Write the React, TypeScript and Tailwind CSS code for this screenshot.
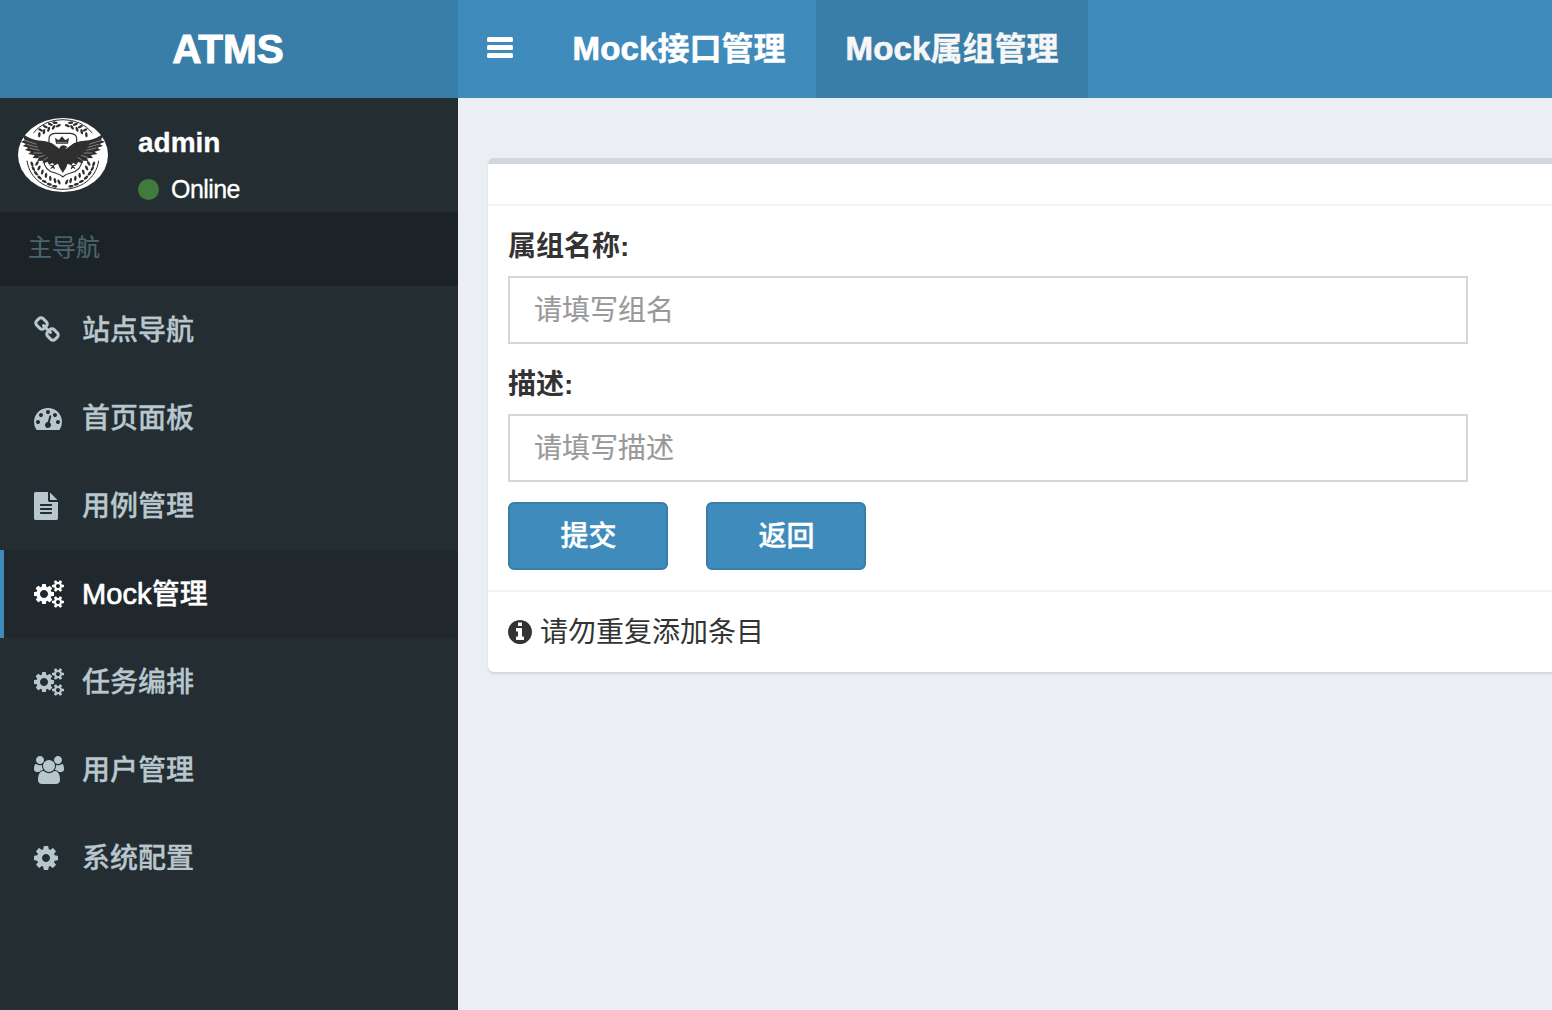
import React from "react";

type Glyph = { box: string; width: number; d: string };

const GEAR_SMALL =
  "v140q0 16-149 31-12 27-30 52 51 113 51 138 0 4-4 7-122 71-124 71-8 0-46-47t-52-68q-20 2-30 2t-30-2q-14 21-52 68t-46 47q-2 0-124-71-4-3-4-7 0-25 51-138-18-25-30-52-149-15-149-31v-140q0-16 149-31 13-29 30-52-51-113-51-138 0-4 4-7 4-2 35-20t59-34 30-16q8 0 46 46.5t52 67.5q20-2 30-2t30 2q51-71 92-112l6-2q4 0 124 70 4 3 4 7 0 25-51 138 17 23 30 52 149 15 149 31z";

const glyphs: Record<string, Glyph> = {
  link: {
    box: "64 0 1664 1792",
    width: 26,
    d: "M1520 1216q0-40-28-68l-208-208q-28-28-68-28-42 0-72 32 3 3 19 18.5t21.5 21.5 15 19 13 25.5 3.5 27.5q0 40-28 68t-68 28q-15 0-27.5-3.5t-25.5-13-19-15-21.5-21.5-18.5-19q-33 31-33 73 0 40 28 68l206 207q27 27 68 27 40 0 68-26l147-146q28-28 28-67zm-703-705q0-40-28-68l-206-207q-28-28-68-28-39 0-68 27l-147 146q-28 28-28 67 0 40 28 68l208 208q27 27 68 27 42 0 72-31-3-3-19-18.5t-21.5-21.5-15-19-13-25.5-3.5-27.5q0-40 28-68t68-28q15 0 27.5 3.5t25.5 13 19 15 21.5 21.5 18.5 19q33-31 33-73zm895 705q0 120-85 203l-147 146q-83 83-203 83-121 0-204-85l-206-207q-83-83-83-203 0-123 88-209l-88-88q-86 88-208 88-120 0-204-84l-208-208q-84-84-84-204t85-203l147-146q83-83 203-83 121 0 204 85l206 207q83 83 83 203 0 123-88 209l88 88q86-88 208-88 120 0 204 84l208 208q84 84 84 204z",
  },
  dashboard: {
    box: "0 0 1792 1792",
    width: 28,
    d: "M384 1152q0-53-37.5-90.5t-90.5-37.5-90.5 37.5-37.5 90.5 37.5 90.5 90.5 37.5 90.5-37.5 37.5-90.5zm192-448q0-53-37.5-90.5t-90.5-37.5-90.5 37.5-37.5 90.5 37.5 90.5 90.5 37.5 90.5-37.5 37.5-90.5zm428 481l101-382q6-26-7.5-48.5t-38.5-29.5-48 6.5-30 39.5l-101 382q-60 5-107 43.5t-63 98.5q-20 77 20 146t117 89 146-20 89-117q16-60-6-117t-72-91zm660-33q0-53-37.5-90.5t-90.5-37.5-90.5 37.5-37.5 90.5 37.5 90.5 90.5 37.5 90.5-37.5 37.5-90.5zm-640-640q0-53-37.5-90.5t-90.5-37.5-90.5 37.5-37.5 90.5 37.5 90.5 90.5 37.5 90.5-37.5 37.5-90.5zm448 192q0-53-37.5-90.5t-90.5-37.5-90.5 37.5-37.5 90.5 37.5 90.5 90.5 37.5 90.5-37.5 37.5-90.5zm320 448q0 261-141 483-19 29-54 29h-1402q-35 0-54-29-141-221-141-483 0-182 71-348t191-286 286-191 348-71 348 71 286 191 191 286 71 348z",
  },
  file: {
    box: "128 0 1536 1792",
    width: 24,
    d: "M1596 476q14 14 28 36h-472v-472q22 14 36 28zm-476 164h544v1056q0 40-28 68t-68 28h-1344q-40 0-68-28t-28-68v-1600q0-40 28-68t68-28h800v544q0 40 28 68t68 28zm160 736v-64q0-14-9-23t-23-9h-704q-14 0-23 9t-9 23v64q0 14 9 23t23 9h704q14 0 23-9t9-23zm0-256v-64q0-14-9-23t-23-9h-704q-14 0-23 9t-9 23v64q0 14 9 23t23 9h704q14 0 23-9t9-23zm0-256v-64q0-14-9-23t-23-9h-704q-14 0-23 9t-9 23v64q0 14 9 23t23 9h704q14 0 23-9t9-23z",
  },
  cogs: {
    box: "-64 0 1920 1792",
    width: 30,
    d:
      "M832 896q0-106-75-181t-181-75-181 75-75 181 75 181 181 75 181-75 75-181zm768 512q0-52-38-90t-90-38-90 38-38 90q0 53 37.5 90.5t90.5 37.5 90.5-37.5 37.5-90.5zm0-1024q0-52-38-90t-90-38-90 38-38 90q0 53 37.5 90.5t90.5 37.5 90.5-37.5 37.5-90.5zm-384 421v185q0 10-7 19.5t-16 10.5l-155 24q-11 35-32 76 34 48 90 115 7 11 7 20 0 12-7 19-23 30-82.5 89.5t-78.5 59.5q-11 0-21-7l-115-90q-37 19-77 31-11 108-23 155-7 24-30 24h-186q-11 0-20-7.5t-10-17.5l-23-153q-34-10-75-31l-118 89q-7 7-20 7-11 0-21-8-144-133-144-160 0-9 7-19 10-14 41-53t47-61q-23-44-35-82l-152-24q-10-1-17-9.5t-7-19.5v-185q0-10 7-19.5t16-10.5l155-24q11-35 32-76-34-48-90-115-7-11-7-20 0-12 7-20 22-30 82-89t79-59q11 0 21 7l115 90q34-18 77-32 11-108 23-154 7-24 30-24h186q11 0 20 7.5t10 17.5l23 153q34 10 75 31l118-89q8-7 20-7 11 0 21 8 144 133 144 160 0 8-7 19-12 16-42 54t-45 60q23 48 34 82l152 23q10 2 17 10.5t7 19.5z" +
      "M1856 1338" + GEAR_SMALL + "M1856 314" + GEAR_SMALL,
  },
  users: {
    box: "0 0 1920 1792",
    width: 30,
    d: "M593 896q-162 5-265 128h-134q-82 0-138-40.5t-56-118.5q0-353 124-353 6 0 43.5 21t97.5 42.5 119 21.5q67 0 133-23-5 37-5 66 0 139 81 256zm1071 637q0 120-73 189.5t-194 69.5h-874q-121 0-194-69.5t-73-189.5q0-53 3.5-103.5t14-109 26.5-108.5 43-97.5 62-81 85.5-53.5 111.5-20q10 0 43 21.5t73 48 107 48 135 21.5 135-21.5 107-48 73-48 43-21.5q61 0 111.5 20t85.5 53.5 62 81 43 97.5 26.5 108.5 14 109 3.5 103.5zm-1024-1277q0 106-75 181t-181 75-181-75-75-181 75-181 181-75 181 75 75 181zm704 384q0 159-112.5 271.5t-271.5 112.5-271.5-112.5-112.5-271.5 112.5-271.5 271.5-112.5 271.5 112.5 112.5 271.5zm576 225q0 78-56 118.5t-138 40.5h-134q-103-123-265-128 81-117 81-256 0-29-5-66 66 23 133 23 59 0 119-21.5t97.5-42.5 43.5-21q124 0 124 353zm-128-609q0 106-75 181t-181 75-181-75-75-181 75-181 181-75 181 75 75 181z",
  },
  cog: {
    box: "128 0 1536 1792",
    width: 24,
    d: "M1152 896q0-106-75-181t-181-75-181 75-75 181 75 181 181 75 181-75 75-181zm512-109v222q0 12-8 23t-20 13l-185 28q-19 54-39 91 35 50 107 138 10 12 10 25t-9 23q-27 37-99 108t-94 71q-12 0-26-9l-138-108q-44 23-91 38-16 136-29 186-7 28-36 28h-222q-14 0-24.5-8.5t-11.5-21.5l-28-184q-49-16-90-37l-141 107q-10 9-25 9-14 0-25-11-126-114-165-168-7-10-7-23 0-12 8-23 15-21 51-66.5t54-70.5q-27-50-41-99l-183-27q-13-2-21-12.5t-8-23.5v-222q0-12 8-23t19-13l186-28q14-46 39-92-40-57-107-138-10-12-10-24 0-10 9-23 26-36 98.5-107.5t94.5-71.5q13 0 26 10l138 107q44-23 91-38 16-136 29-186 7-28 36-28h222q14 0 24.5 8.5t11.5 21.5l28 184q49 16 90 37l142-107q9-9 24-9 13 0 25 10 129 119 165 170 7 8 7 22 0 12-8 23-15 21-51 66.5t-54 70.5q26 50 41 98l183 28q13 2 21 12.5t8 23.5z",
  },
  info: {
    box: "128 0 1536 1792",
    width: 24,
    d: "M1152 1376v-160q0-14-9-23t-23-9h-96v-512q0-14-9-23t-23-9h-320q-14 0-23 9t-9 23v160q0 14 9 23t23 9h96v320h-96q-14 0-23 9t-9 23v160q0 14 9 23t23 9h448q14 0 23-9t9-23zm-128-896v-160q0-14-9-23t-23-9h-192q-14 0-23 9t-9 23v160q0 14 9 23t23 9h192q14 0 23-9t9-23zm640 416q0 209-103 385.5t-279.5 279.5-385.5 103-385.5-103-279.5-279.5-103-385.5 103-385.5 279.5-279.5 385.5-103 385.5 103 279.5 279.5 103 385.5z",
  },
};

function Icon({ name }: { name: string }) {
  const g = glyphs[name];
  return (
    <svg viewBox={g.box} width={g.width} height={28} fill="currentColor" className="shrink-0">
      <path d={g.d} />
    </svg>
  );
}

/* Leaf positions for the left half of the laurel wreath: x, y, rotation. */
const leaves: [number, number, number][] = [
  [64, 50, -85], [68, 36, 30], [78, 41, -80], [82, 26, 25], [92, 34, -70], [97, 19, 20],
  [107, 28, -55], [111, 14, 5], [121, 23, -25],
  [42, 138, 70], [57, 136, 120], [46, 152, 60], [63, 150, 115], [54, 166, 50], [73, 162, 105],
  [65, 179, 40], [84, 172, 95], [79, 190, 25], [97, 181, 85], [94, 199, 15], [111, 188, 75],
  [110, 205, 5], [123, 192, 65],
];

function EmblemHalf() {
  return (
    <g>
      <path d="M46 45Q78 5 135 5" fill="none" stroke="#2f2f2f" strokeWidth="3" />
      <path d="M27 128C35 184 84 214 135 214" fill="none" stroke="#2f2f2f" strokeWidth="3" />
      {leaves.map(([x, y, r], i) => (
        <ellipse key={i} cx={x} cy={y} rx="8" ry="3.8" transform={`rotate(${r} ${x} ${y})`} fill="#2f2f2f" />
      ))}
      <path d="M93 80V60Q95 47 111 46H135" fill="none" stroke="#2f2f2f" strokeWidth="3.5" />
      <path d="M77 126Q79 158 111 165Q127 169 135 177" fill="none" stroke="#2f2f2f" strokeWidth="3.5" />
      <path
        d="M12 46Q34 63 56 67Q86 69 102 76Q114 85 125 93L135 90V165L125 150L120 137L111 141L103 135L93 140L89 132L74 136L75 128L58 129L62 121L44 120L50 112L31 108L39 101L21 96L31 89L14 84L24 78L8 71L20 67Z"
        fill="#2f2f2f"
      />
      <path
        d="M20 67L56 79M26 79L60 88M34 90L64 97M46 105L72 105M60 118L80 112M76 127L90 118"
        fill="none"
        stroke="#fff"
        strokeWidth="1.2"
      />
      <path d="M114 134L106 144M106 144L95 141M106 144L98 152M106 144L109 153" fill="none" stroke="#2f2f2f" strokeWidth="3.5" />
    </g>
  );
}

function Avatar() {
  return (
    <svg viewBox="0 0 270 222" width="90" height="74" className="block shrink-0">
      <ellipse cx="135" cy="111" rx="135" ry="111" fill="#fff" />
      <EmblemHalf />
      <g transform="translate(269 0) scale(-1 1)">
        <EmblemHalf />
      </g>
      <path d="M124 106V91Q127 82 137 82Q145 82 149 90L143 89L145 106Z" fill="#2f2f2f" />
      <path d="M114 77L111 59L122 67L132 55L142 67L153 59L150 77Z" fill="#2f2f2f" />
      <path d="M116 73H148" stroke="#fff" strokeWidth="1.2" />
    </svg>
  );
}

const menu = [
  { icon: "link", label: "站点导航" },
  { icon: "dashboard", label: "首页面板" },
  { icon: "file", label: "用例管理" },
  { icon: "cogs", latin: "Mock", label: "管理", active: true },
  { icon: "cogs", label: "任务编排" },
  { icon: "users", label: "用户管理" },
  { icon: "cog", label: "系统配置" },
];

function Sidebar() {
  return (
    <aside className="w-[458px] shrink-0 bg-[#242d32]">
      <div className="flex h-[114px] pl-[18px] pt-5">
        <Avatar />
        <div className="ml-[30px] pt-[9px] text-white">
          <p className="text-[28px] font-bold leading-[32px] [-webkit-text-stroke:0.3px]">admin</p>
          <div className="mt-[16px] flex items-center">
            <span className="size-[21px] rounded-full bg-[#417a3d]" />
            <span className="ml-3 text-[25px] leading-[28px] tracking-[-0.55px] [-webkit-text-stroke:0.3px]">Online</span>
          </div>
        </div>
      </div>
      <div className="h-[74px] bg-[#1c2326] pl-7 text-[24px] leading-[72px] text-[#4b646f] [-webkit-text-stroke:0.2px]">主导航</div>
      <nav>
        {menu.map((m) => (
          <a
            key={(m.latin ?? "") + m.label}
            className={
              m.active
                ? "flex h-[88px] items-center border-l-4 border-[#3f8bbc] bg-[#20282d] pl-[30px] text-white"
                : "flex h-[88px] items-center border-l-4 border-transparent pl-[30px] text-[#b8c7ce]"
            }
          >
            <span className="flex w-12">
              <Icon name={m.icon} />
            </span>
            <span
              className={
                m.latin
                  ? "text-[28px] font-medium leading-[40px] [-webkit-text-stroke:0.3px]"
                  : "pt-[2px] text-[28px] font-medium leading-[40px] [-webkit-text-stroke:0.3px]"
              }
            >
              {m.latin && <span className="text-[29px] tracking-[0.1px] [-webkit-text-stroke:0.7px]">{m.latin}</span>}
              {m.label}
            </span>
          </a>
        ))}
      </nav>
    </aside>
  );
}

function Field({ label, hint }: { label: string; hint: string }) {
  return (
    <div>
      <label className="block h-[40px] text-[28px] font-bold leading-[42px]">{label}</label>
      <input
        placeholder={hint}
        className="mt-[10px] block h-[68px] w-[960px] border-2 border-[#d2d6de] bg-white px-6 pt-[2px] text-[28px] text-[#555] [-webkit-text-stroke:0.2px] placeholder:text-[#999]"
      />
    </div>
  );
}

function SolidButton({ children }: { children: React.ReactNode }) {
  return (
    <button className="h-[68px] w-[160px] rounded-[6px] border-2 border-[#397ea9] bg-[#3f8bbc] pl-px pt-[2px] text-[28px] font-medium text-white [-webkit-text-stroke:0.4px]">
      {children}
    </button>
  );
}

function HeaderLabel({ text }: { text: string }) {
  return (
    <span className="[-webkit-text-stroke:0.4px]">
      <span className="text-[33px] tracking-[0.1px] [-webkit-text-stroke:0.7px]">Mock</span>
      {text}
    </span>
  );
}

export default function App() {
  return (
    <div className="flex h-[1010px] w-[1552px] flex-col overflow-hidden bg-[#ebeff4] font-['Liberation_Sans','Noto_Sans_CJK_SC',sans-serif] text-[#333]">
      <header className="flex h-[98px] shrink-0 bg-[#3f8bbc] text-white">
        <div className="w-[458px] bg-[#397ea9] pr-[2px] text-center text-[40.5px] font-bold leading-[99px] [-webkit-text-stroke:1px]">
          ATMS
        </div>
        <div className="flex w-[84px] flex-col items-center justify-center gap-[3px] pb-[3px]">
          <span className="h-[5px] w-[26px] rounded-[1.5px] bg-white" />
          <span className="h-[5px] w-[26px] rounded-[1.5px] bg-white" />
          <span className="h-[5px] w-[26px] rounded-[1.5px] bg-white" />
        </div>
        <a className="flex w-[274px] items-center justify-center whitespace-nowrap text-[32px] font-bold">
          <HeaderLabel text="接口管理" />
        </a>
        <a className="flex w-[272px] items-center justify-center whitespace-nowrap bg-[#397ea9] text-[32px] font-bold text-[#f6f6f6]">
          <HeaderLabel text="属组管理" />
        </a>
      </header>
      <div className="flex min-h-0 flex-1">
        <Sidebar />
        <main className="min-w-0 flex-1 pl-[30px] pt-[60px]">
          <section className="rounded-l-[6px] border-t-[6px] border-[#d2d6de] bg-white shadow-[0_2px_2px_rgba(0,0,0,0.1)]">
            <div className="h-[42px] border-b-2 border-[#f4f4f4]" />
            <div className="flex flex-col gap-5 p-5">
              <Field label="属组名称:" hint="请填写组名" />
              <Field label="描述:" hint="请填写描述" />
              <div className="flex gap-[38px]">
                <SolidButton>提交</SolidButton>
                <SolidButton>返回</SolidButton>
              </div>
            </div>
            <div className="flex h-[82px] items-center gap-2 border-t-2 border-[#f4f4f4] px-5 text-[28px]">
              <Icon name="info" />
              <span className="pt-[2px] leading-[40px]">请勿重复添加条目</span>
            </div>
          </section>
        </main>
      </div>
    </div>
  );
}
